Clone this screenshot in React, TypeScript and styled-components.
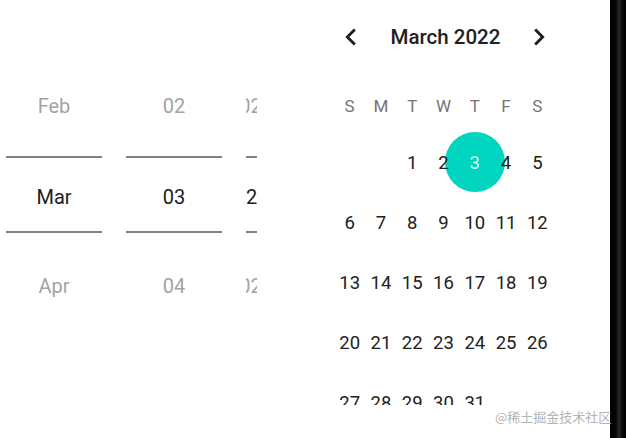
import React from "react";
import styled, { createGlobalStyle } from "styled-components";

const Global = createGlobalStyle`
  html, body { margin: 0; padding: 0; background: #fff; }
  body { font-family: Roboto, "Noto Sans", Arial, sans-serif; }
  * { box-sizing: border-box; }
`;

const Screen = styled.div`
  position: relative;
  display: flex;
  width: 626px;
  height: 438px;
  overflow: hidden;
  background: #fff;
`;

const Picker = styled.div`
  display: flex;
  gap: 24px;
  width: 257px;
  height: 340px;
  padding: 55px 0 0 6px;
  overflow: hidden;
  flex-shrink: 0;
`;

const WheelColumn = styled.div<{ $clip?: boolean }>`
  display: flex;
  flex-direction: column;
  width: 96px;
  flex-shrink: 0;
  overflow: ${(p) => (p.$clip ? "hidden" : "visible")};
`;

const WheelItem = styled.div<{ $h: number; $align?: string }>`
  display: flex;
  align-items: center;
  justify-content: ${(p) => p.$align ?? "center"};
  height: ${(p) => p.$h}px;
  font-size: 20px;
  color: #a3a3a3;
  white-space: nowrap;
`;

const WheelSelected = styled.div<{ $align?: string }>`
  display: flex;
  align-items: center;
  justify-content: ${(p) => p.$align ?? "center"};
  height: 77px;
  padding-top: 4px;
  border-top: 2px solid #828282;
  border-bottom: 2px solid #828282;
  font-size: 20px;
  color: #212121;
  white-space: nowrap;
`;

const Shifted = styled.span<{ $shift: number }>`
  margin-left: ${(p) => p.$shift}px;
`;

const Calendar = styled.div`
  margin-left: 77px;
  width: 222px;
  height: 405px;
  overflow: hidden;
  flex-shrink: 0;
`;

const Header = styled.div`
  display: flex;
  align-items: center;
  justify-content: space-between;
  height: 74px;
`;

const NavButton = styled.div`
  display: flex;
  width: 34px;
  height: 34px;
  color: #1e1e1e;
`;

const Title = styled.div`
  font-size: 20.5px;
  font-weight: 500;
  color: #212121;
  margin-left: 1px;
`;

const Grid = styled.div`
  display: grid;
  grid-template-columns: repeat(7, 1fr);
  width: 219px;
`;

const WeekDay = styled.div`
  display: flex;
  align-items: center;
  justify-content: center;
  height: 58px;
  padding-top: 6px;
  font-size: 17px;
  color: #757575;
`;

const DayCell = styled.div<{ $selected?: boolean }>`
  position: relative;
  display: flex;
  align-items: center;
  justify-content: center;
  height: 60px;
  &::before {
    content: "";
    display: ${(p) => (p.$selected ? "block" : "none")};
    position: absolute;
    left: 50%;
    top: 0;
    width: 60px;
    height: 60px;
    margin-left: -30px;
    border-radius: 50%;
    background: #00d5c0;
    z-index: 0;
  }
`;

const DayLabel = styled.span<{ $selected?: boolean }>`
  position: relative;
  z-index: 1;
  padding-top: 2px;
  font-size: 18.5px;
  color: ${(p) => (p.$selected ? "rgba(255,255,255,0.82)" : "#212121")};
`;

const Spacer = styled.div`
  flex: 1;
`;

const EdgeBar = styled.div`
  width: 16px;
  height: 100%;
  flex-shrink: 0;
  background: linear-gradient(
    to right,
    #000 0px,
    #050505 6px,
    #1f1f1f 8px,
    #242424 10px,
    #0a0a0a 12px,
    #000 16px
  );
`;

const Watermark = styled.div`
  position: absolute;
  left: 495px;
  top: 409px;
  font-family: "Noto Sans CJK SC", "Noto Sans", sans-serif;
  font-size: 13px;
  line-height: 16px;
  color: #b4b4b4;
  white-space: nowrap;
`;

const ChevronLeft = () => (
  <svg width="34" height="34" viewBox="0 0 24 24" fill="currentColor">
    <path d="M15.41 7.41L14 6l-6 6 6 6 1.41-1.41L10.83 12z" />
  </svg>
);

const ChevronRight = () => (
  <svg width="34" height="34" viewBox="0 0 24 24" fill="currentColor">
    <path d="M10 6L8.59 7.41 13.17 12l-4.58 4.59L10 18l6-6z" />
  </svg>
);

const weekDays = ["S", "M", "T", "W", "T", "F", "S"];
const days: (number | null)[] = [null, null, ...Array.from({ length: 31 }, (_, i) => i + 1)];

export default function App() {
  return (
    <>
      <Global />
      <Screen>
        <Picker>
          <WheelColumn>
            <WheelItem $h={101}>Feb</WheelItem>
            <WheelSelected>Mar</WheelSelected>
            <WheelItem $h={106}>Apr</WheelItem>
          </WheelColumn>
          <WheelColumn>
            <WheelItem $h={101}>02</WheelItem>
            <WheelSelected>03</WheelSelected>
            <WheelItem $h={106}>04</WheelItem>
          </WheelColumn>
          <WheelColumn $clip>
            <WheelItem $h={101} $align="flex-start">
              <Shifted $shift={-18}>2021</Shifted>
            </WheelItem>
            <WheelSelected $align="flex-start">
              <Shifted $shift={0}>2022</Shifted>
            </WheelSelected>
            <WheelItem $h={106} $align="flex-start">
              <Shifted $shift={-18}>2023</Shifted>
            </WheelItem>
          </WheelColumn>
        </Picker>
        <Calendar>
          <Header>
            <NavButton>
              <ChevronLeft />
            </NavButton>
            <Title>March 2022</Title>
            <NavButton>
              <ChevronRight />
            </NavButton>
          </Header>
          <Grid>
            {weekDays.map((d, i) => (
              <WeekDay key={i}>{d}</WeekDay>
            ))}
            {days.map((d, i) => (
              <DayCell key={i} $selected={d === 3}>
                {d !== null && <DayLabel $selected={d === 3}>{d}</DayLabel>}
              </DayCell>
            ))}
          </Grid>
        </Calendar>
        <Spacer />
        <EdgeBar />
        <Watermark>@稀土掘金技术社区</Watermark>
      </Screen>
    </>
  );
}
